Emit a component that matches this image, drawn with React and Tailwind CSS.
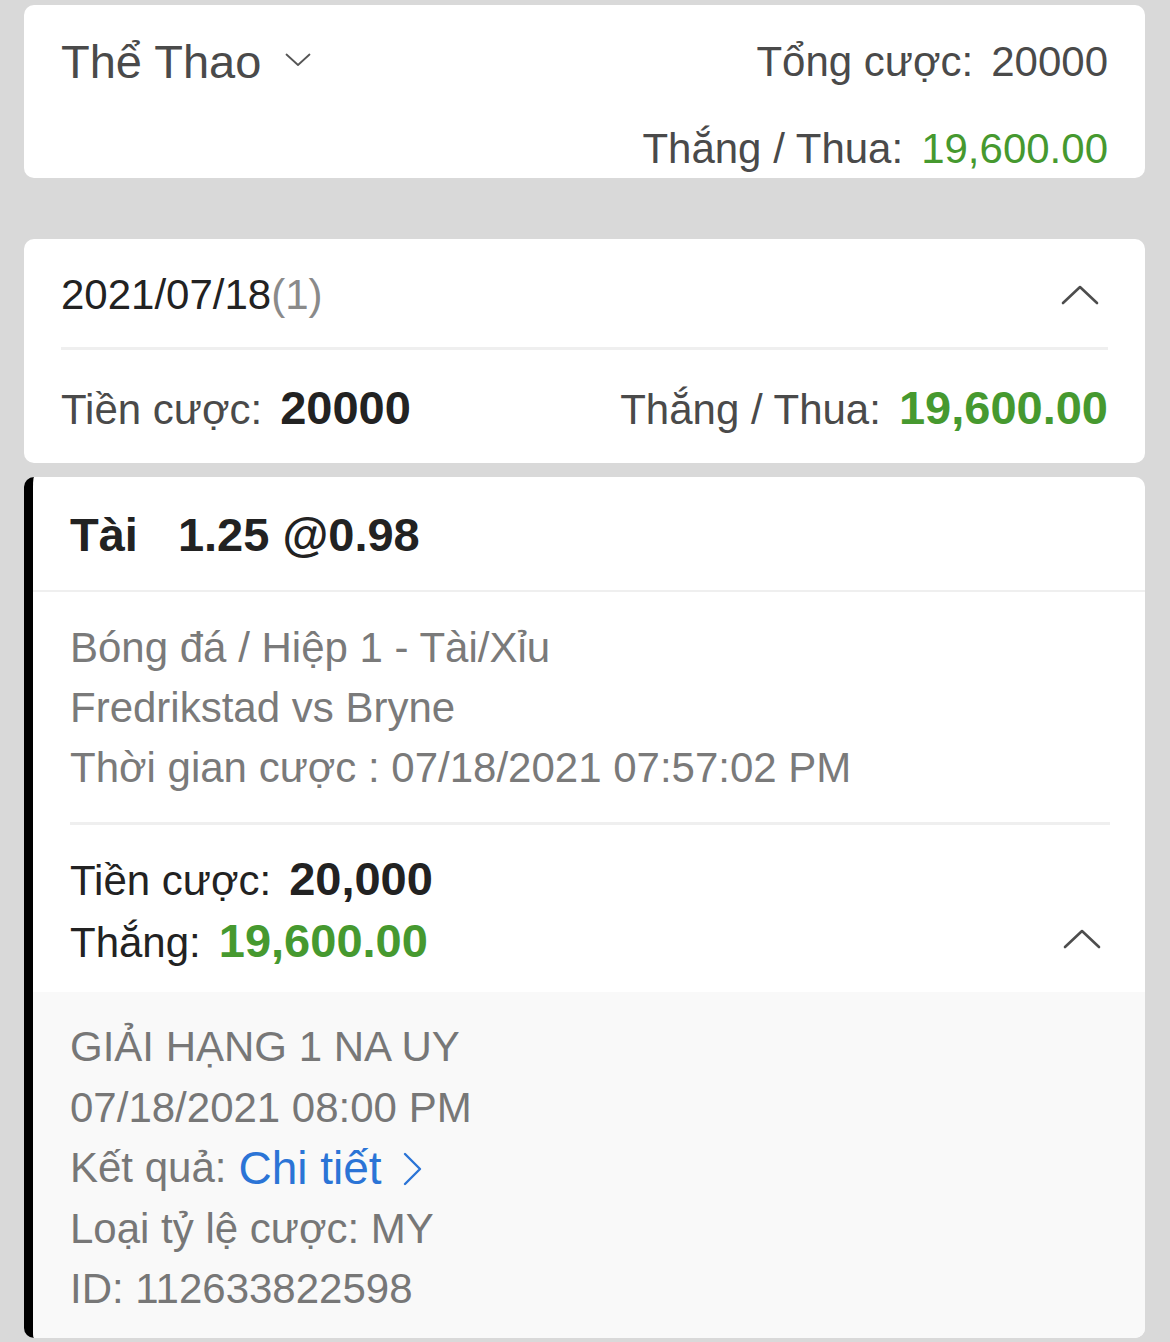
import React from 'react';

const font = { fontFamily: '"Liberation Sans", Arial, Helvetica, sans-serif' };

function ChevronUp({ className = '' }) {
  return (
    <svg width="38" height="20" viewBox="0 0 38 20" className={className} fill="none">
      <polyline points="2,18 19,2 36,18" stroke="#4d4d4d" strokeWidth="2.6" strokeLinecap="round" strokeLinejoin="round" />
    </svg>
  );
}

function ChevronDown() {
  return (
    <svg width="26" height="14" viewBox="0 0 26 14" fill="none">
      <polyline points="1.5,1.5 13,12 24.5,1.5" stroke="#555555" strokeWidth="1.8" strokeLinecap="round" strokeLinejoin="round" />
    </svg>
  );
}

function ChevronRight() {
  return (
    <svg width="20" height="34" viewBox="0 0 20 34" fill="none">
      <polyline points="3,2 18,17 3,32" stroke="#2b74d6" strokeWidth="2.4" strokeLinecap="round" strokeLinejoin="round" />
    </svg>
  );
}

export default function App() {
  const green = 'text-[#46992f]';

  return (
    <div className="min-h-[1342px] bg-[#d9d9d9] pl-[24px] pr-[25px] pt-[5px] pb-[2px]" style={font}>
      {/* summary card */}
      <div className="h-[173px] rounded-[10px] bg-white px-[37px]">
        <div className="flex items-center justify-between h-[60px] translate-y-[27px]">
          <div className="flex items-center gap-[24px]">
            <span className="text-[47px] leading-[60px] text-[#4a4a4a]">Thể Thao</span>
            <span className="mt-[-4px]"><ChevronDown /></span>
          </div>
          <div className="text-[42px] leading-[60px] text-[#4a4a4a]">
            Tổng cược:<span className="ml-[18px]">20000</span>
          </div>
        </div>
        <div className="flex justify-end h-[60px] translate-y-[54px]">
          <div className="text-[42px] leading-[60px] text-[#4a4a4a]">
            Thắng / Thua:<span className={`ml-[18px] ${green}`}>19,600.00</span>
          </div>
        </div>
      </div>

      {/* day card */}
      <div className="mt-[61px] rounded-[10px] bg-white px-[37px] pt-[26px] pb-[24px]">
        <div className="flex items-center justify-between h-[60px]">
          <div className="text-[42px] leading-[60px] text-[#222222]">
            2021/07/18<span className="text-[#8a8a8a]">(1)</span>
          </div>
          <ChevronUp className="mr-[9px]" />
        </div>
        <div className="mt-[22px] h-[3px] bg-[#efefef]" />
        <div className="mt-[29px] flex items-center justify-between h-[60px]">
          <div className="text-[42px] leading-[60px] text-[#4a4a4a]">
            Tiền cược:<span className="ml-[18px] text-[47px] font-bold text-[#222222]">20000</span>
          </div>
          <div className="text-[42px] leading-[60px] text-[#4a4a4a]">
            Thắng / Thua:<span className={`ml-[18px] text-[47px] font-bold ${green}`}>19,600.00</span>
          </div>
        </div>
      </div>

      {/* bet card */}
      <div className="mt-[14px] rounded-[10px] border-l-[9px] border-black bg-white overflow-hidden">
        <div className="h-[113px] pl-[37px] pt-[28px]">
          <div className="text-[47px] leading-[60px] font-bold text-[#222222]">
            Tài<span className="ml-[40px]">1.25 @0.98</span>
          </div>
        </div>
        <div className="h-[2px] bg-[#efefef]" />

        <div className="pl-[37px] pr-[35px]">
          <div className="pt-[26px] text-[42px] leading-[60px] text-[#7a7a7a]">
            <div>Bóng đá / Hiệp 1 - Tài/Xỉu</div>
            <div>Fredrikstad vs Bryne</div>
            <div>Thời gian cược : 07/18/2021 07:57:02 PM</div>
          </div>
          <div className="mt-[24px] h-[3px] bg-[#efefef]" />
          <div className="pt-[24px] pb-[19px] flex items-end justify-between">
            <div className="text-[42px] leading-[60px] text-[#222222]">
              <div>
                Tiền cược:<span className="ml-[18px] text-[47px] font-bold">20,000</span>
              </div>
              <div>
                Thắng:<span className={`ml-[18px] text-[47px] font-bold ${green}`}>19,600.00</span>
              </div>
            </div>
            <ChevronUp className="mb-[24px] mr-[9px]" />
          </div>
        </div>

        <div className="bg-[#f9f9f9] pl-[37px] pt-[25px] pb-[18px] text-[42px] leading-[60.5px] text-[#777777]">
          <div>GIẢI HẠNG 1 NA UY</div>
          <div>07/18/2021 08:00 PM</div>
          <div className="flex items-center">
            Kết quả:<span className="ml-[12px] text-[46px] text-[#2b74d6]">Chi tiết</span>
            <span className="ml-[20px] mt-[2px]"><ChevronRight /></span>
          </div>
          <div>Loại tỷ lệ cược: MY</div>
          <div>ID: 112633822598</div>
        </div>
      </div>
    </div>
  );
}
